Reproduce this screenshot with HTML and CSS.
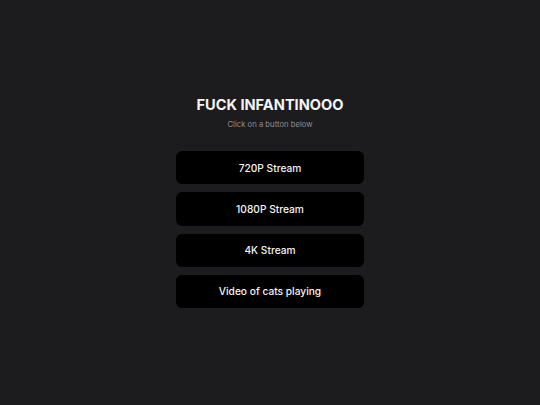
FILE: index.html
```html
<!DOCTYPE html>
<html lang="en">
<head>
<meta charset="utf-8">
<title>FUCK INFANTINOOO</title>
<link rel="stylesheet" href="styles.css">
</head>
<body>
<main class="page">
  <section class="panel">
    <h1 class="title">FUCK INFANTINOOO</h1>
    <p class="subtitle">Click on a button below</p>
    <div class="buttons">
      <button class="btn">720P Stream</button>
      <button class="btn">1080P Stream</button>
      <button class="btn">4K Stream</button>
      <button class="btn">Video of cats playing</button>
    </div>
  </section>
</main>
</body>
</html>
```
FILE: styles.css
```css
* { box-sizing: border-box; }
html, body {
  margin: 0;
  padding: 0;
  background: #1c1c1e;
  font-family: Inter, "Noto Sans", "Liberation Sans", sans-serif;
}
.page {
  height: 100vh;
  display: flex;
  align-items: center;
  justify-content: center;
}
.panel {
  width: 188px;
  padding-bottom: 1.5px;
  display: flex;
  flex-direction: column;
  align-items: center;
}
.title {
  margin: 0;
  font-size: 14.6px;
  line-height: 18px;
  font-weight: 700;
  color: #f4f4f5;
  white-space: nowrap;
}
.subtitle {
  margin: 6px 0 0;
  font-size: 7.7px;
  line-height: 10px;
  color: #8e8e93;
}
.buttons {
  margin-top: 21.5px;
  width: 100%;
  display: flex;
  flex-direction: column;
  gap: 8px;
}
.btn {
  height: 33.25px;
  border: none;
  border-radius: 6px;
  background: #000;
  color: #f4f4f5;
  font-family: inherit;
  font-size: 10.2px;
  font-weight: 500;
  cursor: pointer;
}
```
